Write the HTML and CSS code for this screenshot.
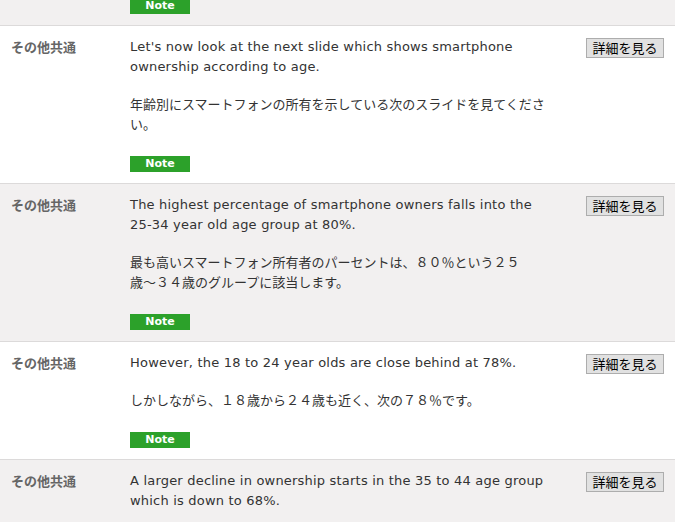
FILE: index.html
```html
<!DOCTYPE html>
<html>
<head>
    <meta charset="UTF-8">
    <title>Notes</title>
    <link rel="stylesheet" href="styles.css">
</head>
<body>
<div class="list">
    <div class="row row-tail alt">
        <div class="label"></div>
        <div class="body">
            <span class="note">Note</span>
        </div>
        <div class="action"></div>
    </div>

    <div class="row">
        <div class="label">その他共通</div>
        <div class="body">
            <p class="en">Let's now look at the next slide which shows smartphone ownership according to age.</p>
            <p class="ja">年齢別にスマートフォンの所有を示している次のスライドを見てください。</p>
            <span class="note">Note</span>
        </div>
        <div class="action"><button>詳細を見る</button></div>
    </div>

    <div class="row alt">
        <div class="label">その他共通</div>
        <div class="body">
            <p class="en">The highest percentage of smartphone owners falls into the <span class="nowrap">25-34</span> year old age group at 80%.</p>
            <p class="ja">最も高いスマートフォン所有者のパーセントは、８０％という２５<br>歳～３４歳のグループに該当します。</p>
            <span class="note">Note</span>
        </div>
        <div class="action"><button>詳細を見る</button></div>
    </div>

    <div class="row">
        <div class="label">その他共通</div>
        <div class="body">
            <p class="en">However, the 18 to 24 year olds are close behind at 78%.</p>
            <p class="ja">しかしながら、１８歳から２４歳も近く、次の７８％です。</p>
            <span class="note">Note</span>
        </div>
        <div class="action"><button>詳細を見る</button></div>
    </div>

    <div class="row alt">
        <div class="label">その他共通</div>
        <div class="body">
            <p class="en">A larger decline in ownership starts in the 35 to 44 age group which is down to 68%.</p>
        </div>
        <div class="action"><button>詳細を見る</button></div>
    </div>
</div>
</body>
</html>
```

FILE: styles.css
```css
body {
    margin: 0;
    padding: 0;
    background-color: #fff;
    color: #333;
    font-family: "DejaVu Sans", Verdana, "Noto Sans CJK JP", sans-serif;
    font-size: 13px;
}

.list {
    width: 675px;
    margin-top: -2px;
}

.row {
    display: grid;
    grid-template-columns: 119px 456px 78px;
    padding: 11px 0 11px 11px;
    border-bottom: 1px solid #dcdada;
    background-color: #fff;
}

.row.alt {
    background-color: #f2f0f0;
}

.row-tail {
    padding-top: 0;
}

.label {
    font-family: "Noto Sans CJK JP", sans-serif;
    font-weight: bold;
    color: #666;
    line-height: 20px;
}

.body {
    width: 420px;
}

.body p {
    margin: 0 0 18px 0;
    line-height: 20px;
}

.body p.en {
    letter-spacing: 0.2px;
}

.body p.ja {
    margin-bottom: 21px;
}

.nowrap {
    white-space: nowrap;
}

.note {
    display: block;
    width: 60px;
    height: 16px;
    line-height: 16px;
    background-color: #2ca12a;
    color: #fff;
    font-size: 11px;
    font-weight: bold;
    text-align: center;
}

.action button {
    margin-top: 1px;
    width: 78px;
    height: 20px;
    padding: 0;
    background-color: #e1e1e1;
    border: 1px solid #adadad;
    border-radius: 0;
    color: #000;
    font-family: "Noto Sans CJK JP", sans-serif;
    font-size: 13px;
    line-height: 16px;
}
```
